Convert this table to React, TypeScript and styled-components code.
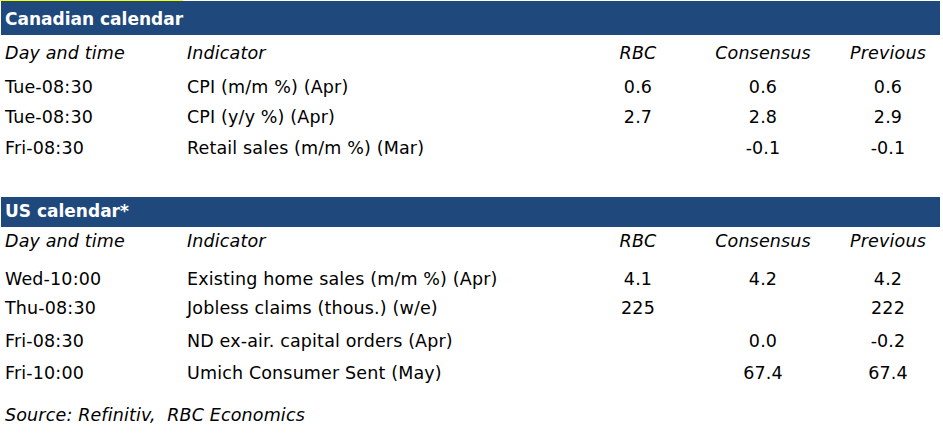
import React from 'react';
import styled, { createGlobalStyle } from 'styled-components';

type Cell = string;

interface CalendarRow {
  day: Cell;
  indicator: Cell;
  rbc: Cell;
  consensus: Cell;
  previous: Cell;
  height: number;
}

const GlobalStyle = createGlobalStyle`
  html, body {
    margin: 0;
    padding: 0;
    background: #ffffff;
  }
  body {
    font-family: "DejaVu Sans", Verdana, sans-serif;
    font-size: 17.5px;
    letter-spacing: 0.15px;
    color: #000000;
  }
`;

const Page = styled.div`
  width: 943px;
  height: 448px;
  overflow: hidden;
  display: flex;
  flex-direction: column;
`;

const TopEdge = styled.div`
  height: 1px;
  display: flex;
`;

const Highlight = styled.div`
  width: 183px;
  height: 1px;
  background: #ffff00;
`;

const Bar = styled.div<{ $h: number; $pt: number }>`
  height: ${p => p.$h}px;
  width: 939px;
  margin-left: 1px;
  box-sizing: border-box;
  padding: ${p => p.$pt}px 0 0 4px;
  background: #1f497d;
  color: #ffffff;
  font-size: 17px;
  letter-spacing: 0;
  font-weight: bold;
  line-height: 20px;
  white-space: nowrap;
`;

const Row = styled.div<{ $h: number; $pt?: number; $italic?: boolean }>`
  display: grid;
  grid-template-columns: 182px 413px 76px 174px 76px;
  padding-left: 5px;
  box-sizing: border-box;
  height: ${p => p.$h}px;
  padding-top: ${p => p.$pt ?? 0}px;
  line-height: 20px;
  font-style: ${p => (p.$italic ? 'italic' : 'normal')};
  white-space: nowrap;
`;

const Text = styled.div``;

const Num = styled.div`
  text-align: center;
`;

const Spacer = styled.div<{ $h: number }>`
  height: ${p => p.$h}px;
`;

const Source = styled.div`
  padding-left: 5px;
  font-style: italic;
  line-height: 20px;
  white-space: pre;
`;

const canadian: CalendarRow[] = [
  { day: 'Tue-08:30', indicator: 'CPI (m/m %) (Apr)', rbc: '0.6', consensus: '0.6', previous: '0.6', height: 30 },
  { day: 'Tue-08:30', indicator: 'CPI (y/y %) (Apr)', rbc: '2.7', consensus: '2.8', previous: '2.9', height: 31 },
  { day: 'Fri-08:30', indicator: 'Retail sales (m/m %) (Mar)', rbc: '', consensus: '-0.1', previous: '-0.1', height: 20 },
];

const us: CalendarRow[] = [
  { day: 'Wed-10:00', indicator: 'Existing home sales (m/m %) (Apr)', rbc: '4.1', consensus: '4.2', previous: '4.2', height: 29 },
  { day: 'Thu-08:30', indicator: 'Jobless claims (thous.) (w/e)', rbc: '225', consensus: '', previous: '222', height: 33 },
  { day: 'Fri-08:30', indicator: 'ND ex-air. capital orders (Apr)', rbc: '', consensus: '0.0', previous: '-0.2', height: 32 },
  { day: 'Fri-10:00', indicator: 'Umich Consumer Sent (May)', rbc: '', consensus: '67.4', previous: '67.4', height: 20 },
];

const HeaderRow: React.FC<{ pt: number }> = ({ pt }) => (
  <Row $h={42} $pt={pt} $italic>
    <Text>Day and time</Text>
    <Text>Indicator</Text>
    <Num>RBC</Num>
    <Num>Consensus</Num>
    <Num>Previous</Num>
  </Row>
);

const DataRows: React.FC<{ rows: CalendarRow[] }> = ({ rows }) => (
  <>
    {rows.map((r, i) => (
      <Row key={i} $h={r.height}>
        <Text>{r.day}</Text>
        <Text>{r.indicator}</Text>
        <Num>{r.rbc}</Num>
        <Num>{r.consensus}</Num>
        <Num>{r.previous}</Num>
      </Row>
    ))}
  </>
);

const App: React.FC = () => (
  <>
    <GlobalStyle />
    <Page>
      <TopEdge>
        <Highlight />
      </TopEdge>
      <Bar $h={34} $pt={8}>Canadian calendar</Bar>
      <HeaderRow pt={8} />
      <DataRows rows={canadian} />
      <Spacer $h={39} />
      <Bar $h={30} $pt={4}>US calendar*</Bar>
      <HeaderRow pt={4} />
      <DataRows rows={us} />
      <Spacer $h={22} />
      <Source>{'Source: Refinitiv,  RBC Economics'}</Source>
    </Page>
  </>
);

export default App;
